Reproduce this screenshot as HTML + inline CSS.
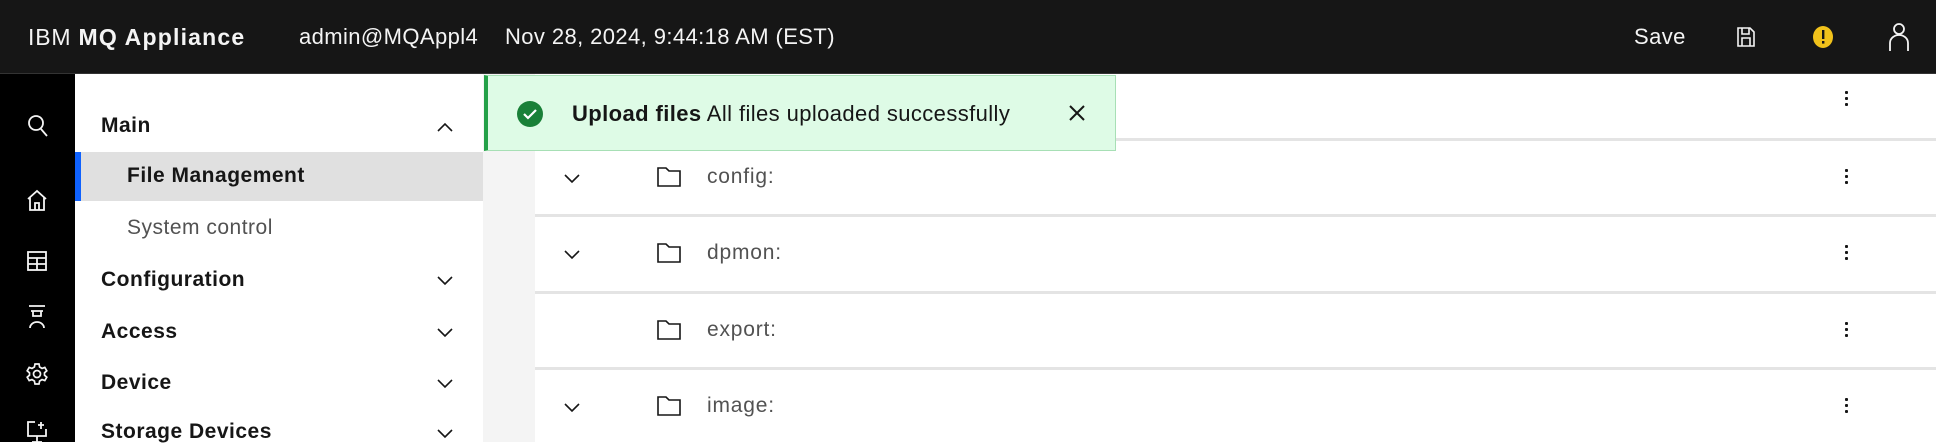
<!DOCTYPE html>
<html><head><style>
*{margin:0;padding:0;box-sizing:border-box}
body{width:1936px;height:442px;overflow:hidden;background:#fff;font-family:"Liberation Sans",sans-serif;position:relative;color:#161616}
.a{position:absolute;white-space:nowrap}
.hdr{position:absolute;left:0;top:0;width:1936px;height:74px;background:#161616;border-bottom:1px solid #333}
.hdr .a{color:#f4f4f4;font-size:22px;top:24px;letter-spacing:0.4px}
.rail{position:absolute;left:0;top:74px;width:75px;height:368px;background:#000}
.nav{position:absolute;left:75px;top:74px;width:408px;height:368px;background:#fff}
.strip{position:absolute;left:483px;top:74px;width:52px;height:368px;background:#f4f4f4}
.nav .a{font-size:21px;left:26px;letter-spacing:0.5px}
.b{font-weight:bold}
.chev{position:absolute;left:362px}
.line{position:absolute;left:535px;width:1401px;height:3px;background:#e4e4e4}
.row .a{font-size:21px;color:#525252;letter-spacing:0.8px}
.keb{position:absolute;left:1845px;width:4px}
.keb i{display:block;width:3px;height:3px;background:#161616;margin-bottom:3px;border-radius:1px}
</style></head><body>
<div class="hdr">
<div class="a" style="left:28px;font-size:23px;letter-spacing:0.8px">IBM <b style="letter-spacing:1.2px">MQ Appliance</b></div>
<div class="a" style="left:299px">admin@MQAppl4</div>
<div class="a" style="left:505px">Nov 28, 2024, 9:44:18 AM (EST)</div>
<div class="a" style="left:1634px">Save</div>
<svg class="a" style="left:1736px;top:26px" width="20" height="22" viewBox="0 0 20 22" fill="none" stroke="#f4f4f4" stroke-width="1.6"><path d="M2 2h12l4 4v14H2z"/><path d="M6 2v6h7V2M6 20v-8h8v8"/></svg>
<svg class="a" style="left:1812px;top:25px" width="22" height="24"><ellipse cx="11" cy="12" rx="10" ry="11" fill="#f1c21b"/><rect x="10" y="5" width="2.4" height="9" fill="#161616"/><rect x="10" y="16" width="2.4" height="2.6" fill="#161616"/></svg>
<svg class="a" style="left:1888px;top:22px" width="22" height="30" fill="none" stroke="#f4f4f4" stroke-width="1.8"><circle cx="11" cy="7" r="5"/><path d="M2 29V21a9 8 0 0 1 18 0v8"/></svg>
</div>
<div class="rail">
<svg class="a" style="left:27px;top:40px" width="22" height="24" fill="none" stroke="#f4f4f4" stroke-width="1.8"><circle cx="9" cy="9" r="7"/><path d="M14 15l6 7"/></svg>
<svg class="a" style="left:26px;top:114px" width="22" height="24" fill="none" stroke="#f4f4f4" stroke-width="1.8"><path d="M2 11L11 3l9 8M4 9v13h14V9M9 22v-7h4v7"/></svg>
<svg class="a" style="left:26px;top:176px" width="22" height="22" fill="none" stroke="#f4f4f4" stroke-width="1.8"><rect x="2" y="2" width="18" height="18"/><path d="M2 8h18M2 14h18M11 8v12"/></svg>
<svg class="a" style="left:26px;top:230px" width="22" height="26" fill="none" stroke="#f4f4f4" stroke-width="1.8"><path d="M3 2h16M5 7h12M7 7v5h8V7M4 24a7 6 0 0 1 14 0"/></svg>
<svg class="a" style="left:25px;top:288px" width="24" height="24" viewBox="0 0 24 24" fill="none" stroke="#f4f4f4" stroke-width="1.7"><circle cx="12" cy="12" r="3.5"/><path d="M10 2h4l.6 3 2.4 1.4 2.8-1 2 3.4-2.3 2v2.4l2.3 2-2 3.4-2.8-1-2.4 1.4-.6 3h-4l-.6-3-2.4-1.4-2.8 1-2-3.4 2.3-2v-2.4l-2.3-2 2-3.4 2.8 1L9.4 5z"/></svg>
<svg class="a" style="left:26px;top:346px" width="22" height="22" fill="none" stroke="#f4f4f4" stroke-width="1.8"><path d="M9 2H2v14h18V9M11 16v6M6 22h10M15 2v7M12 5h6"/></svg>
</div>
<div class="nav">
<div class="a b" style="top:40px">Main</div>
<svg class="chev" style="top:48px" width="16" height="10" fill="none" stroke="#161616" stroke-width="1.6"><path d="M1 9l7-7 7 7"/></svg>
<div class="a" style="left:0;top:78px;width:408px;height:49px;background:#e0e0e0;border-left:6px solid #0f62fe"></div>
<div class="a b" style="left:52px;top:90px">File Management</div>
<div class="a" style="left:52px;top:142px;color:#525252">System control</div>
<div class="a b" style="top:194px">Configuration</div>
<div class="a b" style="top:246px">Access</div>
<div class="a b" style="top:297px">Device</div>
<div class="a b" style="top:346px">Storage Devices</div>
<svg class="chev" style="top:202px" width="16" height="10" fill="none" stroke="#161616" stroke-width="1.6"><path d="M1 1l7 7 7-7"/></svg>
<svg class="chev" style="top:254px" width="16" height="10" fill="none" stroke="#161616" stroke-width="1.6"><path d="M1 1l7 7 7-7"/></svg>
<svg class="chev" style="top:305px" width="16" height="10" fill="none" stroke="#161616" stroke-width="1.6"><path d="M1 1l7 7 7-7"/></svg>
<svg class="chev" style="top:355px" width="16" height="10" fill="none" stroke="#161616" stroke-width="1.6"><path d="M1 1l7 7 7-7"/></svg>
</div>
<div class="strip"></div>
<div class="line" style="top:138px"></div>
<div class="line" style="top:214px"></div>
<div class="line" style="top:291px"></div>
<div class="line" style="top:367px"></div>
<div class="row">
<div class="keb" style="top:91px"><i></i><i></i><i></i></div>
<div class="keb" style="top:169px"><i></i><i></i><i></i></div>
<div class="keb" style="top:245px"><i></i><i></i><i></i></div>
<div class="keb" style="top:322px"><i></i><i></i><i></i></div>
<div class="keb" style="top:398px"><i></i><i></i><i></i></div>
<svg class="a" style="left:564px;top:174px" width="16" height="10" fill="none" stroke="#161616" stroke-width="1.6"><path d="M1 1l7 7 7-7"/></svg>
<svg class="a" style="left:564px;top:250px" width="16" height="10" fill="none" stroke="#161616" stroke-width="1.6"><path d="M1 1l7 7 7-7"/></svg>
<svg class="a" style="left:564px;top:403px" width="16" height="10" fill="none" stroke="#161616" stroke-width="1.6"><path d="M1 1l7 7 7-7"/></svg>
<svg class="a" style="left:657px;top:167px" width="24" height="20" fill="none" stroke="#161616" stroke-width="1.6"><path d="M1 1h8l3 3h11v15H1z"/></svg>
<svg class="a" style="left:657px;top:243px" width="24" height="20" fill="none" stroke="#161616" stroke-width="1.6"><path d="M1 1h8l3 3h11v15H1z"/></svg>
<svg class="a" style="left:657px;top:320px" width="24" height="20" fill="none" stroke="#161616" stroke-width="1.6"><path d="M1 1h8l3 3h11v15H1z"/></svg>
<svg class="a" style="left:657px;top:396px" width="24" height="20" fill="none" stroke="#161616" stroke-width="1.6"><path d="M1 1h8l3 3h11v15H1z"/></svg>
<div class="a" style="left:707px;top:165px">config:</div>
<div class="a" style="left:707px;top:241px">dpmon:</div>
<div class="a" style="left:707px;top:318px">export:</div>
<div class="a" style="left:707px;top:394px">image:</div>
</div>
<div class="a" style="left:484px;top:75px;width:632px;height:76px;background:#defbe6;border:1px solid #a7dfb5;border-left:4px solid #24a148"></div>
<svg class="a" style="left:516px;top:100px" width="28" height="28"><circle cx="14" cy="14" r="13" fill="#198038"/><path d="M8 14l4 4 8-8" fill="none" stroke="#fff" stroke-width="2.2"/></svg>
<div class="a" style="left:572px;top:101px;font-size:22px;letter-spacing:0.4px"><b>Upload files</b> All files uploaded successfully</div>
<svg class="a" style="left:1068px;top:104px" width="18" height="18" stroke="#161616" stroke-width="2"><path d="M2 2l14 14M16 2L2 16"/></svg>
</body></html>
